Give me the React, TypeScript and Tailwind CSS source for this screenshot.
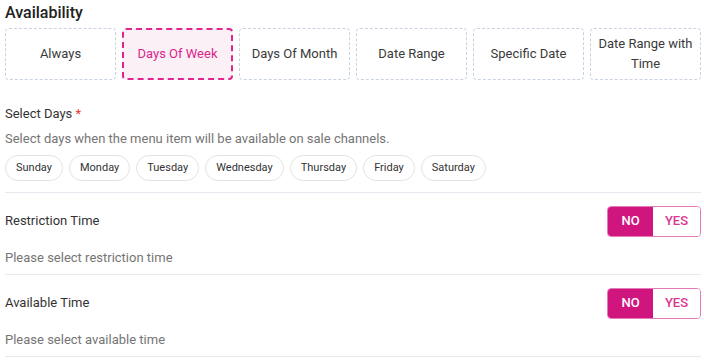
const modes = ['Always', 'Days Of Week', 'Days Of Month', 'Date Range', 'Specific Date', 'Date Range with Time'];
const days = ['Sunday', 'Monday', 'Tuesday', 'Wednesday', 'Thursday', 'Friday', 'Saturday'];

function Toggle() {
  return (
    <div className="flex h-[31px] w-[94px] overflow-hidden rounded border border-[#e37bb8] text-[13px] font-medium">
      <div className="flex w-[45px] items-center justify-center bg-[#d1157f] text-white">NO</div>
      <div className="flex flex-1 items-center justify-center bg-white text-[#d9368f]">YES</div>
    </div>
  );
}

function TimeSection({ title, hint }: { title: string; hint: string }) {
  return (
    <div className="border-b border-[#e6e9ef]">
      <div className="flex h-[56px] items-center justify-between">
        <span className="text-[13px] text-[#333]">{title}</span>
        <Toggle />
      </div>
      <div className="pb-[7px] text-[13px] leading-[18px] text-[#757575]">{hint}</div>
    </div>
  );
}

export default function App() {
  return (
    <div className="h-[364px] w-[704px] bg-white pl-[5px] pr-[3px] pt-[1px] font-['Roboto',sans-serif]">
      <h2 className="text-[16px] font-medium leading-[24px] text-[#222]">Availability</h2>
      <div className="mt-[3px] grid grid-cols-6 gap-[6px]">
        {modes.map((m) => {
          const active = m === 'Days Of Week';
          return (
            <div
              key={m}
              className={`flex h-[52px] items-center justify-center rounded px-1 text-center text-[13px] leading-[20px] ${
                active
                  ? 'border-2 border-dashed border-[#e0268e] bg-[#fcf0f7] text-[#d9268a]'
                  : 'border border-dashed border-[#c9d3e0] text-[#3a3a3a]'
              }`}
            >
              {m}
            </div>
          );
        })}
      </div>

      <div className="mt-[25px] text-[13px] leading-[18px] text-[#333]">
        Select Days <span className="text-[#e53935]">*</span>
      </div>
      <div className="mt-[7px] text-[13px] leading-[18px] text-[#757575]">
        Select days when the menu item will be available on sale channels.
      </div>
      <div className="mt-[7px] flex gap-[6px] border-b border-[#e6e9ef] pb-[11px]">
        {days.map((d) => (
          <span
            key={d}
            className="flex h-[26px] items-center rounded-full border border-[#e3e3e3] px-[10px] text-[11px] text-[#333]"
          >
            {d}
          </span>
        ))}
      </div>

      <TimeSection title="Restriction Time" hint="Please select restriction time" />
      <TimeSection title="Available Time" hint="Please select available time" />
    </div>
  );
}
